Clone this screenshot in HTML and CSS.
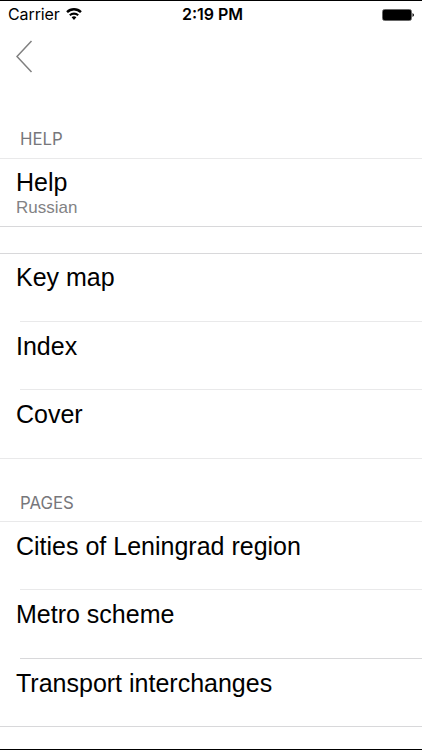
FILE: index.html
```
<!DOCTYPE html>
<html lang="en"><head><meta charset="utf-8"><title>Help</title><link rel="stylesheet" href="styles.css"></head>
<body>
<header class="status"><div class="carrier"><span>Carrier</span><svg class="wifi" width="16" height="12" viewBox="0 0 16 12"><path d="M8 12 5.6 9.3a3.5 3.5 0 0 1 4.8 0zM4.5 8.1 3.1 6.6a7 7 0 0 1 9.8 0l-1.4 1.5a5 5 0 0 0-7 0zM1.9 5 .2 3.3a11 11 0 0 1 15.6 0L14.1 5a8.7 8.7 0 0 0-12.2 0z"/></svg></div><span class="time">2:19 PM</span><svg class="battery" width="33" height="12" viewBox="0 0 33 12"><rect x=".5" y=".5" width="29" height="11" rx="2" fill="none" stroke="#000" stroke-width=".6"/><rect x="1" y="1" width="28" height="10" rx="1"/><path d="M30.5 4q3 2 0 4z"/></svg></header>
<nav class="nav"><svg width="18" height="34" viewBox="0 0 18 34"><path d="M15.5 1 1 16.5 15.5 32" fill="none" stroke="#808080" stroke-width="1.5"/></svg></nav>
<main>
<h2 class="heading first"><span>HELP</span></h2>
<div class="row strong help"><span class="title">Help</span><small>Russian</small></div>
<div class="gap"></div>
<div class="row inset lead"><span class="title">Key map</span></div>
<div class="row inset"><span class="title">Index</span></div>
<div class="row"><span class="title">Cover</span></div>
<h2 class="heading"><span>PAGES</span></h2>
<div class="row inset"><span class="title">Cities of Leningrad region</span></div>
<div class="row inset strong"><span class="title">Metro scheme</span></div>
<div class="row strong"><span class="title">Transport interchanges</span></div>
</main>
</body></html>
```
FILE: styles.css
```
* { box-sizing: border-box; }
body { margin: 0; height: 750px; overflow: hidden; background: #fff; color: #000; font-family: "Liberation Sans", Arial, sans-serif; border-top: 1px solid #000; border-bottom: 1px solid #000; }
.status { height: 27px; display: grid; grid-template-columns: 1fr auto 1fr; align-items: center; padding: 0 7px 0 8px; font: 16px/27px Inter, sans-serif; }
.carrier { display: flex; align-items: center; gap: 7px; letter-spacing: -.1px; }
.wifi { margin: -2px 0 0 -1px; }
.time { font-weight: 600; padding-left: 2px; }
.battery { justify-self: end; }
.nav { height: 66px; padding: 12px 16px; }
.heading { margin: 0; height: 63px; padding: 34px 20px 0; border-bottom: 1px solid #e9e9ea; font: 400 16.8px/20px Inter, sans-serif; color: #77777b; }
.first { height: 65px; padding-top: 35px; }
.row { height: 68.5px; padding: 8px 16px 0; border-bottom: 1px solid #e9e9ea; font-size: 25px; line-height: 32px; }
.title { display: block; width: max-content; }
.inset { border-bottom: 0; background: linear-gradient(#e9e9ea, #e9e9ea) 20px 100% / 100% 1px no-repeat; }
.strong { border-bottom-color: #d8d8da; }
.inset.strong { background-image: linear-gradient(#d8d8da, #d8d8da); }
.help { height: 68px; padding-top: 7px; }
.lead { height: 67.8px; padding-top: 7px; }
small { display: block; margin-top: 1px; font-size: 17px; line-height: 18px; color: #828284; }
.gap { height: 27px; border-bottom: 1px solid #d8d8da; }
```
